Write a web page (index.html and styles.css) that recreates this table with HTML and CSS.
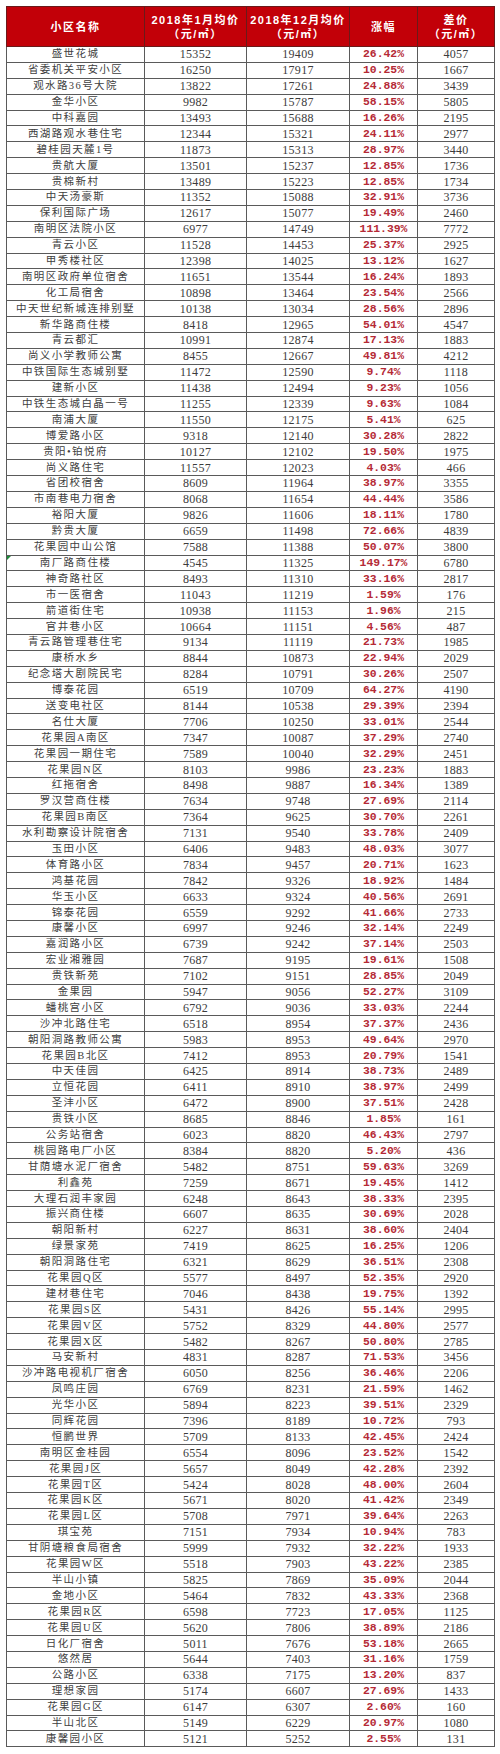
FILE: index.html
```html
<!DOCTYPE html>
<html lang="zh-CN">
<head>
<meta charset="utf-8">
<title>2018贵阳小区均价</title>
<link rel="stylesheet" href="styles.css">
</head>
<body>
<table class="sheet">
<colgroup><col class="c-name"><col class="c-jan"><col class="c-dec"><col class="c-up"><col class="c-diff"></colgroup>
<thead>
<tr class="head">
<th>小区名称</th>
<th>2018年1月均价<br>（元/㎡）</th>
<th>2018年12月均价<br>（元/㎡）</th>
<th>涨幅</th>
<th>差价<br>（元/㎡）</th>
</tr>
</thead>
<tbody>
<tr><td class="name">盛世花城</td><td>15352</td><td>19409</td><td class="pct">26.42%</td><td>4057</td></tr>
<tr><td class="name">省委机关平安小区</td><td>16250</td><td>17917</td><td class="pct">10.25%</td><td>1667</td></tr>
<tr><td class="name">观水路36号大院</td><td>13822</td><td>17261</td><td class="pct">24.88%</td><td>3439</td></tr>
<tr><td class="name">金华小区</td><td>9982</td><td>15787</td><td class="pct">58.15%</td><td>5805</td></tr>
<tr><td class="name">中科嘉园</td><td>13493</td><td>15688</td><td class="pct">16.26%</td><td>2195</td></tr>
<tr><td class="name">西湖路观水巷住宅</td><td>12344</td><td>15321</td><td class="pct">24.11%</td><td>2977</td></tr>
<tr><td class="name">碧桂园天麓1号</td><td>11873</td><td>15313</td><td class="pct">28.97%</td><td>3440</td></tr>
<tr><td class="name">贵航大厦</td><td>13501</td><td>15237</td><td class="pct">12.85%</td><td>1736</td></tr>
<tr><td class="name">贵棉新村</td><td>13489</td><td>15223</td><td class="pct">12.85%</td><td>1734</td></tr>
<tr><td class="name">中天汤豪斯</td><td>11352</td><td>15088</td><td class="pct">32.91%</td><td>3736</td></tr>
<tr><td class="name">保利国际广场</td><td>12617</td><td>15077</td><td class="pct">19.49%</td><td>2460</td></tr>
<tr><td class="name">南明区法院小区</td><td>6977</td><td>14749</td><td class="pct">111.39%</td><td>7772</td></tr>
<tr><td class="name">青云小区</td><td>11528</td><td>14453</td><td class="pct">25.37%</td><td>2925</td></tr>
<tr><td class="name">甲秀楼社区</td><td>12398</td><td>14025</td><td class="pct">13.12%</td><td>1627</td></tr>
<tr><td class="name">南明区政府单位宿舍</td><td>11651</td><td>13544</td><td class="pct">16.24%</td><td>1893</td></tr>
<tr><td class="name">化工局宿舍</td><td>10898</td><td>13464</td><td class="pct">23.54%</td><td>2566</td></tr>
<tr><td class="name">中天世纪新城连排别墅</td><td>10138</td><td>13034</td><td class="pct">28.56%</td><td>2896</td></tr>
<tr><td class="name">新华路商住楼</td><td>8418</td><td>12965</td><td class="pct">54.01%</td><td>4547</td></tr>
<tr><td class="name">青云都汇</td><td>10991</td><td>12874</td><td class="pct">17.13%</td><td>1883</td></tr>
<tr><td class="name">尚义小学教师公寓</td><td>8455</td><td>12667</td><td class="pct">49.81%</td><td>4212</td></tr>
<tr><td class="name">中铁国际生态城别墅</td><td>11472</td><td>12590</td><td class="pct">9.74%</td><td>1118</td></tr>
<tr><td class="name">建新小区</td><td>11438</td><td>12494</td><td class="pct">9.23%</td><td>1056</td></tr>
<tr><td class="name">中铁生态城白晶一号</td><td>11255</td><td>12339</td><td class="pct">9.63%</td><td>1084</td></tr>
<tr><td class="name">南浦大厦</td><td>11550</td><td>12175</td><td class="pct">5.41%</td><td>625</td></tr>
<tr><td class="name">博爱路小区</td><td>9318</td><td>12140</td><td class="pct">30.28%</td><td>2822</td></tr>
<tr><td class="name">贵阳•铂悦府</td><td>10127</td><td>12102</td><td class="pct">19.50%</td><td>1975</td></tr>
<tr><td class="name">尚义路住宅</td><td>11557</td><td>12023</td><td class="pct">4.03%</td><td>466</td></tr>
<tr><td class="name">省团校宿舍</td><td>8609</td><td>11964</td><td class="pct">38.97%</td><td>3355</td></tr>
<tr><td class="name">市南巷电力宿舍</td><td>8068</td><td>11654</td><td class="pct">44.44%</td><td>3586</td></tr>
<tr><td class="name">裕阳大厦</td><td>9826</td><td>11606</td><td class="pct">18.11%</td><td>1780</td></tr>
<tr><td class="name">黔贵大厦</td><td>6659</td><td>11498</td><td class="pct">72.66%</td><td>4839</td></tr>
<tr><td class="name">花果园中山公馆</td><td>7588</td><td>11388</td><td class="pct">50.07%</td><td>3800</td></tr>
<tr><td class="name flagged">南厂路商住楼</td><td>4545</td><td>11325</td><td class="pct">149.17%</td><td>6780</td></tr>
<tr><td class="name">神奇路社区</td><td>8493</td><td>11310</td><td class="pct">33.16%</td><td>2817</td></tr>
<tr><td class="name">市一医宿舍</td><td>11043</td><td>11219</td><td class="pct">1.59%</td><td>176</td></tr>
<tr><td class="name">箭道街住宅</td><td>10938</td><td>11153</td><td class="pct">1.96%</td><td>215</td></tr>
<tr><td class="name">官井巷小区</td><td>10664</td><td>11151</td><td class="pct">4.56%</td><td>487</td></tr>
<tr><td class="name">青云路管理巷住宅</td><td>9134</td><td>11119</td><td class="pct">21.73%</td><td>1985</td></tr>
<tr><td class="name">康桥水乡</td><td>8844</td><td>10873</td><td class="pct">22.94%</td><td>2029</td></tr>
<tr><td class="name">纪念塔大剧院民宅</td><td>8284</td><td>10791</td><td class="pct">30.26%</td><td>2507</td></tr>
<tr><td class="name">博泰花园</td><td>6519</td><td>10709</td><td class="pct">64.27%</td><td>4190</td></tr>
<tr><td class="name">送变电社区</td><td>8144</td><td>10538</td><td class="pct">29.39%</td><td>2394</td></tr>
<tr><td class="name">名仕大厦</td><td>7706</td><td>10250</td><td class="pct">33.01%</td><td>2544</td></tr>
<tr><td class="name">花果园A南区</td><td>7347</td><td>10087</td><td class="pct">37.29%</td><td>2740</td></tr>
<tr><td class="name">花果园一期住宅</td><td>7589</td><td>10040</td><td class="pct">32.29%</td><td>2451</td></tr>
<tr><td class="name">花果园N区</td><td>8103</td><td>9986</td><td class="pct">23.23%</td><td>1883</td></tr>
<tr><td class="name">红拖宿舍</td><td>8498</td><td>9887</td><td class="pct">16.34%</td><td>1389</td></tr>
<tr><td class="name">罗汉营商住楼</td><td>7634</td><td>9748</td><td class="pct">27.69%</td><td>2114</td></tr>
<tr><td class="name">花果园B南区</td><td>7364</td><td>9625</td><td class="pct">30.70%</td><td>2261</td></tr>
<tr><td class="name">水利勘察设计院宿舍</td><td>7131</td><td>9540</td><td class="pct">33.78%</td><td>2409</td></tr>
<tr><td class="name">玉田小区</td><td>6406</td><td>9483</td><td class="pct">48.03%</td><td>3077</td></tr>
<tr><td class="name">体育路小区</td><td>7834</td><td>9457</td><td class="pct">20.71%</td><td>1623</td></tr>
<tr><td class="name">鸿基花园</td><td>7842</td><td>9326</td><td class="pct">18.92%</td><td>1484</td></tr>
<tr><td class="name">华玉小区</td><td>6633</td><td>9324</td><td class="pct">40.56%</td><td>2691</td></tr>
<tr><td class="name">锦泰花园</td><td>6559</td><td>9292</td><td class="pct">41.66%</td><td>2733</td></tr>
<tr><td class="name">康馨小区</td><td>6997</td><td>9246</td><td class="pct">32.14%</td><td>2249</td></tr>
<tr><td class="name">嘉润路小区</td><td>6739</td><td>9242</td><td class="pct">37.14%</td><td>2503</td></tr>
<tr><td class="name">宏业湘雅园</td><td>7687</td><td>9195</td><td class="pct">19.61%</td><td>1508</td></tr>
<tr><td class="name">贵铁新苑</td><td>7102</td><td>9151</td><td class="pct">28.85%</td><td>2049</td></tr>
<tr><td class="name">金果园</td><td>5947</td><td>9056</td><td class="pct">52.27%</td><td>3109</td></tr>
<tr><td class="name">蟠桃宫小区</td><td>6792</td><td>9036</td><td class="pct">33.03%</td><td>2244</td></tr>
<tr><td class="name">沙冲北路住宅</td><td>6518</td><td>8954</td><td class="pct">37.37%</td><td>2436</td></tr>
<tr><td class="name">朝阳洞路教师公寓</td><td>5983</td><td>8953</td><td class="pct">49.64%</td><td>2970</td></tr>
<tr><td class="name">花果园B北区</td><td>7412</td><td>8953</td><td class="pct">20.79%</td><td>1541</td></tr>
<tr><td class="name">中天佳园</td><td>6425</td><td>8914</td><td class="pct">38.73%</td><td>2489</td></tr>
<tr><td class="name">立恒花园</td><td>6411</td><td>8910</td><td class="pct">38.97%</td><td>2499</td></tr>
<tr><td class="name">圣沣小区</td><td>6472</td><td>8900</td><td class="pct">37.51%</td><td>2428</td></tr>
<tr><td class="name">贵铁小区</td><td>8685</td><td>8846</td><td class="pct">1.85%</td><td>161</td></tr>
<tr><td class="name">公务站宿舍</td><td>6023</td><td>8820</td><td class="pct">46.43%</td><td>2797</td></tr>
<tr><td class="name">桃园路电厂小区</td><td>8384</td><td>8820</td><td class="pct">5.20%</td><td>436</td></tr>
<tr><td class="name">甘荫塘水泥厂宿舍</td><td>5482</td><td>8751</td><td class="pct">59.63%</td><td>3269</td></tr>
<tr><td class="name">利鑫苑</td><td>7259</td><td>8671</td><td class="pct">19.45%</td><td>1412</td></tr>
<tr><td class="name">大理石润丰家园</td><td>6248</td><td>8643</td><td class="pct">38.33%</td><td>2395</td></tr>
<tr><td class="name">振兴商住楼</td><td>6607</td><td>8635</td><td class="pct">30.69%</td><td>2028</td></tr>
<tr><td class="name">朝阳新村</td><td>6227</td><td>8631</td><td class="pct">38.60%</td><td>2404</td></tr>
<tr><td class="name">绿景家苑</td><td>7419</td><td>8625</td><td class="pct">16.25%</td><td>1206</td></tr>
<tr><td class="name">朝阳洞路住宅</td><td>6321</td><td>8629</td><td class="pct">36.51%</td><td>2308</td></tr>
<tr><td class="name">花果园Q区</td><td>5577</td><td>8497</td><td class="pct">52.35%</td><td>2920</td></tr>
<tr><td class="name">建材巷住宅</td><td>7046</td><td>8438</td><td class="pct">19.75%</td><td>1392</td></tr>
<tr><td class="name">花果园S区</td><td>5431</td><td>8426</td><td class="pct">55.14%</td><td>2995</td></tr>
<tr><td class="name">花果园V区</td><td>5752</td><td>8329</td><td class="pct">44.80%</td><td>2577</td></tr>
<tr><td class="name">花果园X区</td><td>5482</td><td>8267</td><td class="pct">50.80%</td><td>2785</td></tr>
<tr><td class="name">马安新村</td><td>4831</td><td>8287</td><td class="pct">71.53%</td><td>3456</td></tr>
<tr><td class="name">沙冲路电视机厂宿舍</td><td>6050</td><td>8256</td><td class="pct">36.46%</td><td>2206</td></tr>
<tr><td class="name">凤鸣庄园</td><td>6769</td><td>8231</td><td class="pct">21.59%</td><td>1462</td></tr>
<tr><td class="name">光华小区</td><td>5894</td><td>8223</td><td class="pct">39.51%</td><td>2329</td></tr>
<tr><td class="name">同辉花园</td><td>7396</td><td>8189</td><td class="pct">10.72%</td><td>793</td></tr>
<tr><td class="name">恒鹏世界</td><td>5709</td><td>8133</td><td class="pct">42.45%</td><td>2424</td></tr>
<tr><td class="name">南明区金桂园</td><td>6554</td><td>8096</td><td class="pct">23.52%</td><td>1542</td></tr>
<tr><td class="name">花果园J区</td><td>5657</td><td>8049</td><td class="pct">42.28%</td><td>2392</td></tr>
<tr><td class="name">花果园T区</td><td>5424</td><td>8028</td><td class="pct">48.00%</td><td>2604</td></tr>
<tr><td class="name">花果园K区</td><td>5671</td><td>8020</td><td class="pct">41.42%</td><td>2349</td></tr>
<tr><td class="name">花果园L区</td><td>5708</td><td>7971</td><td class="pct">39.64%</td><td>2263</td></tr>
<tr><td class="name">琪宝苑</td><td>7151</td><td>7934</td><td class="pct">10.94%</td><td>783</td></tr>
<tr><td class="name">甘阴塘粮食局宿舍</td><td>5999</td><td>7932</td><td class="pct">32.22%</td><td>1933</td></tr>
<tr><td class="name">花果园W区</td><td>5518</td><td>7903</td><td class="pct">43.22%</td><td>2385</td></tr>
<tr><td class="name">半山小镇</td><td>5825</td><td>7869</td><td class="pct">35.09%</td><td>2044</td></tr>
<tr><td class="name">金地小区</td><td>5464</td><td>7832</td><td class="pct">43.33%</td><td>2368</td></tr>
<tr><td class="name">花果园R区</td><td>6598</td><td>7723</td><td class="pct">17.05%</td><td>1125</td></tr>
<tr><td class="name">花果园U区</td><td>5620</td><td>7806</td><td class="pct">38.89%</td><td>2186</td></tr>
<tr><td class="name">日化厂宿舍</td><td>5011</td><td>7676</td><td class="pct">53.18%</td><td>2665</td></tr>
<tr><td class="name">悠然居</td><td>5644</td><td>7403</td><td class="pct">31.16%</td><td>1759</td></tr>
<tr><td class="name">公路小区</td><td>6338</td><td>7175</td><td class="pct">13.20%</td><td>837</td></tr>
<tr><td class="name">理想家园</td><td>5174</td><td>6607</td><td class="pct">27.69%</td><td>1433</td></tr>
<tr><td class="name">花果园G区</td><td>6147</td><td>6307</td><td class="pct">2.60%</td><td>160</td></tr>
<tr><td class="name">半山北区</td><td>5149</td><td>6229</td><td class="pct">20.97%</td><td>1080</td></tr>
<tr><td class="name">康馨园小区</td><td>5121</td><td>5252</td><td class="pct">2.55%</td><td>131</td></tr>
</tbody>
</table>
</body>
</html>
```
FILE: styles.css
```css
html, body {
  margin: 0;
  padding: 0;
  background: #ffffff;
}

body {
  padding: 6px 6px 0 6px;
}

.sheet {
  border-collapse: collapse;
  table-layout: fixed;
  width: 488px;
  font-family: "Liberation Serif", "Noto Sans CJK SC", serif;
  color: #3c3c3c;
}

.c-name { width: 138px; }
.c-jan { width: 102px; }
.c-dec { width: 103px; }
.c-up { width: 68px; }
.c-diff { width: 77px; }

.head th {
  height: 39px;
  padding: 0;
  background: #c20008;
  color: #ffffff;
  font-family: "Liberation Sans", "Noto Sans CJK SC", sans-serif;
  font-weight: bold;
  font-size: 11px;
  line-height: 14px;
  letter-spacing: 1.5px;
  border: 1px solid #6a1a1a;
  text-align: center;
  vertical-align: middle;
}

tbody td {
  height: 14.9px;
  padding: 0;
  border: 1px solid #5a5a5a;
  text-align: center;
  vertical-align: middle;
  font-size: 12px;
  line-height: 14px;
  letter-spacing: 0.3px;
  white-space: nowrap;
  overflow: hidden;
}

tbody td.name {
  font-size: 10.5px;
  letter-spacing: 1.4px;
  color: #404040;
}

tbody td.pct {
  font-family: "Liberation Mono", "DejaVu Sans Mono", monospace;
  font-weight: bold;
  font-size: 11.4px;
  letter-spacing: 0;
  color: #b52a36;
}

td.flagged {
  position: relative;
}

td.flagged::before {
  content: "";
  position: absolute;
  left: 0;
  top: 0;
  width: 0;
  height: 0;
  border-top: 4px solid #1e8a3a;
  border-right: 4px solid transparent;
}
```
